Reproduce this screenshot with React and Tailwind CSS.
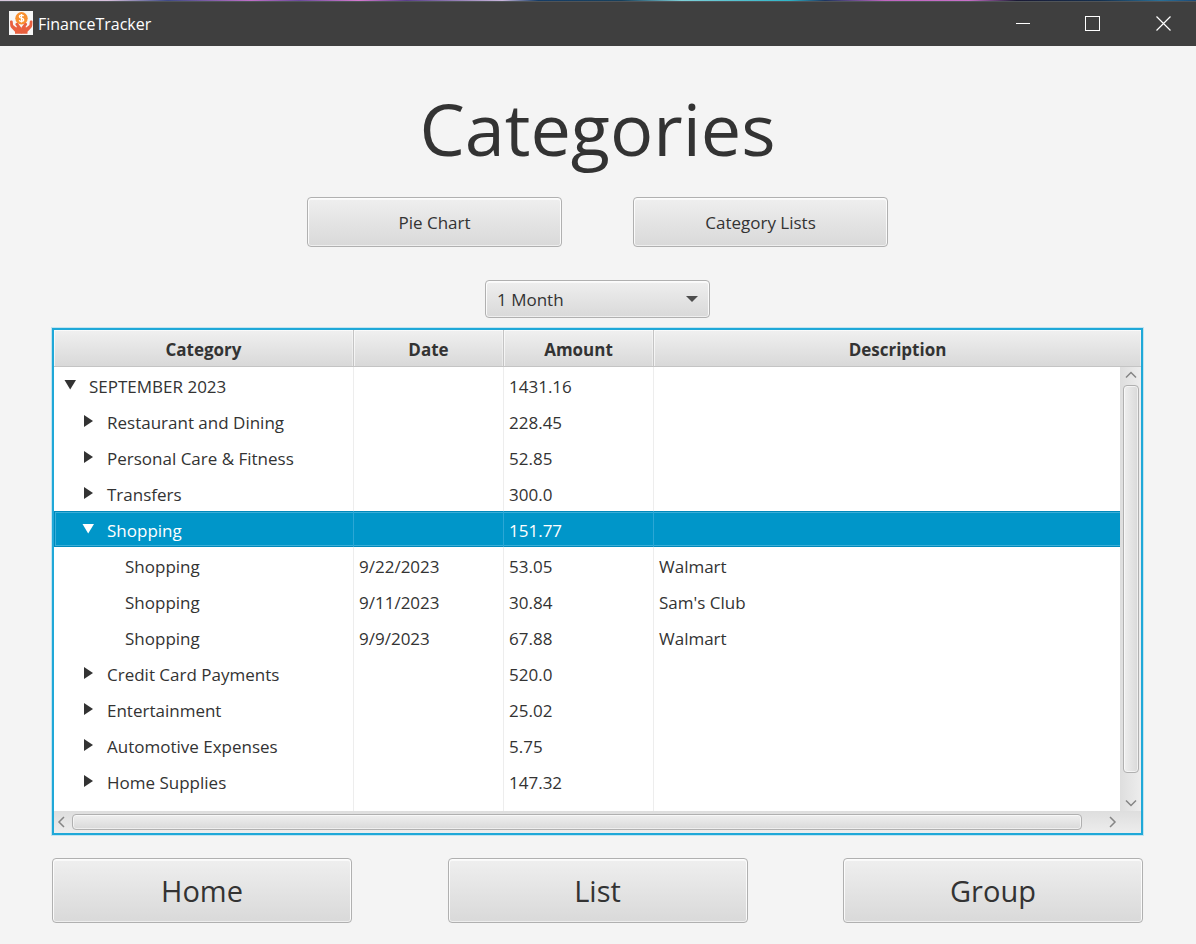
import { useState } from "react";

const ROWS = [
  { level: 0, category: "SEPTEMBER 2023", amount: "1431.16", open: true },
  { level: 1, category: "Restaurant and Dining", amount: "228.45", open: false },
  { level: 1, category: "Personal Care & Fitness", amount: "52.85", open: false },
  { level: 1, category: "Transfers", amount: "300.0", open: false },
  { level: 1, category: "Shopping", amount: "151.77", open: true },
  { level: 2, category: "Shopping", date: "9/22/2023", amount: "53.05", description: "Walmart" },
  { level: 2, category: "Shopping", date: "9/11/2023", amount: "30.84", description: "Sam's Club" },
  { level: 2, category: "Shopping", date: "9/9/2023", amount: "67.88", description: "Walmart" },
  { level: 1, category: "Credit Card Payments", amount: "520.0", open: false },
  { level: 1, category: "Entertainment", amount: "25.02", open: false },
  { level: 1, category: "Automotive Expenses", amount: "5.75", open: false },
  { level: 1, category: "Home Supplies", amount: "147.32", open: false },
];

const INDENT = ["pl-2", "pl-[26px]", "pl-[44px]"];

const RAISED =
  "rounded border border-[#b0b0b0] bg-linear-to-b from-[#efefef] to-[#d9d9d9] text-[#333333] shadow-[inset_0_0_0_1px_#ffffff90,inset_0_1px_0_1px_#ffffffa0]";

function AppIcon() {
  return (
    <svg className="size-6 shrink-0" viewBox="0 0 24 24" aria-hidden="true">
      <rect width="24" height="24" fill="#f7f7f7" />
      <circle cx="12.5" cy="7.3" r="6.2" fill="#f9902f" />
      <path
        d="M14.6 5.2c-.5-.7-1.200-1-2.100-1-1.200 0-2.100.6-2.100 1.500 0 2.100 4.300.9 4.300 3.100 0 1-.9 1.600-2.200 1.600-1 0-1.900-.4-2.300-1.200M12.500 3v8.600"
        fill="none"
        stroke="#fff"
        strokeWidth="1.300"
      />
      <path
        d="M1 10.500c0-1.400 2.600-1.400 2.700 0l.4 3.400 2.800 2.400c.8.500 1.300-.3.700-1l-1.100-1.500c-.7-1.300 1.200-2.700 2.300-1.700l2.600 3.300c.9 1 1.100 2 1.100 3.500v3.900H6v-2.100l-3.800-4c-.7-.7-.9-1.500-1-2.400z"
        fill="#e9603f"
      />
      <path
        d="M23.500 10.500c0-1.400-2.600-1.400-2.700 0l-.4 3.400-2.800 2.400c-.8.500-1.300-.3-.7-1l1.100-1.500c.7-1.300-1.200-2.700-2.300-1.700l-2.600 3.300c-.9 1-1.100 2-1.100 3.500v3.900h6.500v-2.100l3.800-4c.7-.7.9-1.500 1-2.400z"
        fill="#e9603f"
      />
    </svg>
  );
}

function TitleBar() {
  return (
    <header className="bg-[#3f3f3f]">
      <div className="h-px bg-[linear-gradient(90deg,#d8c8dc_0%,#d8c0dc_9%,#3f4a86_14%,#c06fc8_21%,#6b4a9a_25%,#d67ad0_30%,#5a3f8a_34%,#c9b6dc_42%,#153c66_45%,#17405c_52%,#7fd0d8_57%,#2fb5c8_66%,#1d3560_69%,#c065c0_74%,#c870c8_81%,#1b1a35_85%,#14304f_92%,#2a6f96_97%,#1b4a78_100%)]" />
      <div className="flex h-[45px] items-center border-t border-[#505458] pr-6 pb-[2px] pl-[9px]">
        <AppIcon />
        <span className="ml-[5px] pt-0.5 text-[16px] text-white">FinanceTracker</span>
        <div className="ml-auto flex gap-[55px]">
          <button type="button" aria-label="Minimize">
            <svg className="size-4" viewBox="0 0 16 16" stroke="#fff" fill="none">
              <path d="M2 8.500h14" />
            </svg>
          </button>
          <button type="button" aria-label="Maximize">
            <svg className="size-4" viewBox="0 0 16 16" stroke="#fff" fill="none">
              <rect x=".5" y="1.500" width="14" height="14" />
            </svg>
          </button>
          <button type="button" aria-label="Close">
            <svg className="size-4" viewBox="0 0 16 16" stroke="#fff" strokeWidth="1.200" fill="none">
              <path d="M.5 1.500l14 14M14.500 1.500l-14 14" />
            </svg>
          </button>
        </div>
      </div>
    </header>
  );
}

function Disclosure({ open, label }) {
  return (
    <button type="button" aria-label={label} aria-expanded={open} className="flex w-4 justify-center">
      <svg className="size-3" viewBox="0 0 12 12" fill="currentColor">
        {open ? <path d="M.5 1h11.500L6.200 10.500z" /> : <path d="M2 0v12l9-6z" />}
      </svg>
    </button>
  );
}

function Chevron({ d, label }) {
  return (
    <button type="button" aria-label={label} className="flex size-[18px] shrink-0 items-center justify-center">
      <svg className="size-3" viewBox="0 0 12 12" fill="none" stroke="#858585" strokeWidth="1.500">
        <path d={d} />
      </svg>
    </button>
  );
}

function TreeTable() {
  const [selected, setSelected] = useState(4);
  return (
    <div className="border-2 border-[#1fa8d8] bg-[#ebebeb] ring-1 ring-[#8fd3ec]/50">
      <div className="relative">
        <table className="w-full table-fixed border-separate border-spacing-0 bg-white text-[17px]">
          <colgroup>
            <col className="w-[300px]" />
            <col className="w-[150px]" />
            <col className="w-[150px]" />
            <col />
          </colgroup>
          <thead>
            <tr className="h-[37px] bg-linear-to-b from-[#f0f0f0] to-[#d8d8d8] font-bold">
              {["Category", "Date", "Amount", "Description"].map((title) => (
                <th
                  key={title}
                  scope="col"
                  className="border-r border-b border-[#c4c4c4] p-0 pt-1 shadow-[inset_1px_1px_0_#ffffffa0,inset_-1px_0_0_#ffffff60] last:border-r-0"
                >
                  {title}
                </th>
              ))}
            </tr>
          </thead>
          <tbody>
            {ROWS.map((row, i) => {
              const active = i === selected;
              const cell = active
                ? "border-r border-[#2ba7d5] p-0 pt-1 pl-[5px] last:border-r-0"
                : "border-r border-[#ededed] p-0 pt-1 pl-[5px] last:border-r-0";
              return (
                <tr
                  key={i}
                  aria-selected={active}
                  onClick={() => setSelected(i)}
                  className={
                    active
                      ? "h-9 bg-[#0096c9] text-white shadow-[inset_0_0_0_1px_#0089bb,inset_0_0_0_2px_#3aaed8]"
                      : "h-9"
                  }
                >
                  <td className={active ? "border-r border-[#2ba7d5] p-0" : "border-r border-[#ededed] p-0"}>
                    <div className={`flex items-center gap-[11px] ${INDENT[row.level]}`}>
                      {row.level < 2 ? (
                        <Disclosure open={row.open} label={`Toggle ${row.category}`} />
                      ) : (
                        <span className="w-4" />
                      )}
                      <span className="pt-1">{row.category}</span>
                    </div>
                  </td>
                  <td className={cell}>{row.date}</td>
                  <td className={cell}>{row.amount}</td>
                  <td className={cell}>{row.description}</td>
                </tr>
              );
            })}
            <tr className="h-3" aria-hidden="true">
              <td className="border-r border-[#ededed] p-0" />
              <td className="border-r border-[#ededed] p-0" />
              <td className="border-r border-[#ededed] p-0" />
              <td className="p-0" />
            </tr>
          </tbody>
        </table>
        <div className="absolute top-[37px] right-0 bottom-0 flex w-[21px] flex-col items-center bg-linear-to-r from-[#dedede] to-[#ededed]">
          <Chevron label="Scroll up" d="M1 7.500L6 2.500l5 5" />
          <div className="mb-5 w-4 grow rounded border border-[#b0b0b0] bg-linear-to-r from-[#efefef] to-[#d9d9d9] shadow-[inset_0_0_0_1px_#ffffff90]" />
          <Chevron label="Scroll down" d="M1 4.500l5 5 5-5" />
        </div>
      </div>
      <div className="flex h-[22px] items-center bg-linear-to-b from-[#dedede] to-[#ededed] pr-5">
        <Chevron label="Scroll left" d="M7 1L2 6l5 5" />
        <div className="mr-[21px] h-4 grow rounded border border-[#b0b0b0] bg-linear-to-b from-[#efefef] to-[#d9d9d9] shadow-[inset_0_0_0_1px_#ffffff90]" />
        <Chevron label="Scroll right" d="M4 1l5 5-5 5" />
      </div>
    </div>
  );
}

export default function App() {
  return (
    <div className="flex min-h-screen flex-col bg-[#f4f4f4] font-['Open_Sans','Noto_Sans',sans-serif] text-[#333333]">
      <TitleBar />
      <main className="flex flex-col pt-[34px] pr-[53px] pb-5 pl-[52px]">
        <h1 className="text-center text-[72px] leading-[96px]">Categories</h1>
        <nav className="mt-[21px] flex justify-center gap-[71px] text-[17px]">
          <button type="button" className={`h-[50px] w-[255px] pt-0.5 ${RAISED}`}>Pie Chart</button>
          <button type="button" className={`h-[50px] w-[255px] pt-0.5 ${RAISED}`}>Category Lists</button>
        </nav>
        <div className="relative mx-auto mt-[33px] mb-[10px] w-[225px]">
          <select
            aria-label="Period"
            defaultValue="1 Month"
            className={`block h-[38px] w-full appearance-none pt-0.5 pl-[11px] text-[17px] ${RAISED}`}
          >
            <option>1 Month</option>
          </select>
          <svg className="pointer-events-none absolute top-4 right-3 h-[6px] w-3" viewBox="0 0 12 6" fill="#4d4d4d">
            <path d="M0 0h12L6 6z" />
          </svg>
        </div>
        <TreeTable />
        <nav className="mt-[23px] flex justify-between text-[29px]">
          <button type="button" className={`h-[65px] w-[300px] ${RAISED}`}>Home</button>
          <button type="button" className={`h-[65px] w-[300px] ${RAISED}`}>List</button>
          <button type="button" className={`h-[65px] w-[300px] ${RAISED}`}>Group</button>
        </nav>
      </main>
    </div>
  );
}
